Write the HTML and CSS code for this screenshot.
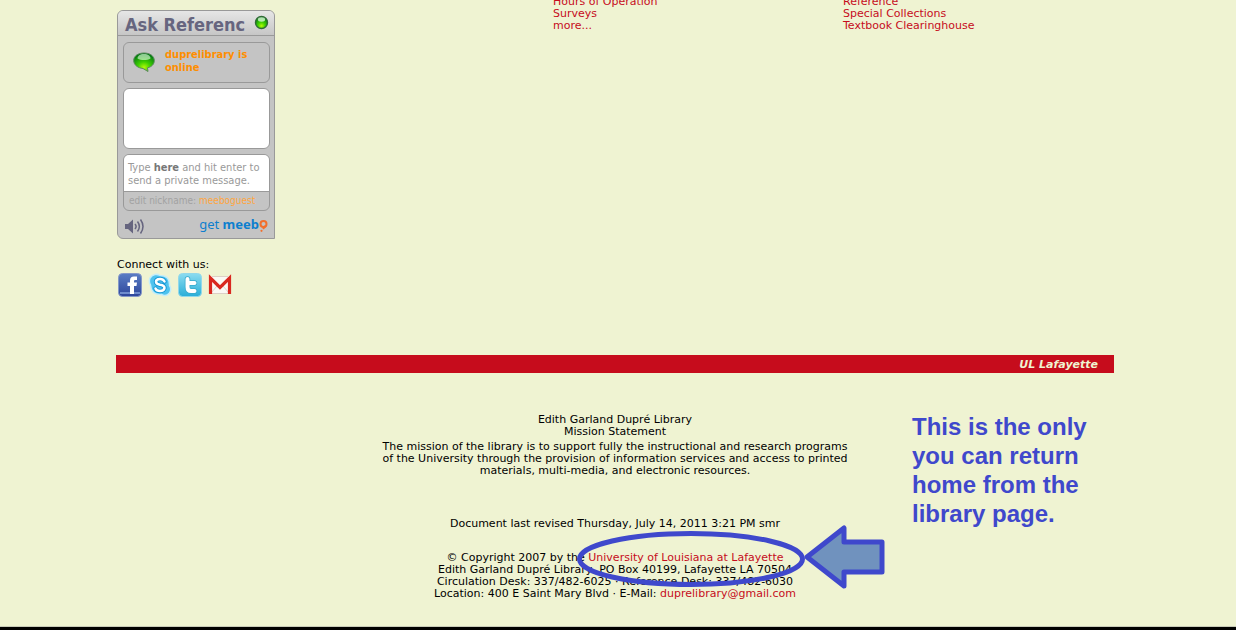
FILE: index.html
```html
<!DOCTYPE html>
<html lang="en">
<head>
<meta charset="utf-8">
<title>Edith Garland Dupré Library</title>
<link rel="stylesheet" href="styles.css">
</head>
<body>
<div class="page">
  <main class="content">
    <aside class="sidebar">
      <section class="chat">
        <header class="chat-head">
          <h2 class="chat-title">Ask Referenc</h2>
          <svg class="chat-dot" width="15" height="15" viewBox="0 0 15 15" aria-hidden="true">
            <defs>
              <radialGradient id="orb" cx="50%" cy="78%" r="75%"><stop offset="0" stop-color="#b4fa08"/><stop offset=".4" stop-color="#3fd000"/><stop offset="1" stop-color="#007414"/></radialGradient>
            </defs>
            <circle cx="7.5" cy="7.5" r="6" fill="url(#orb)" stroke="#2f6b35" stroke-width="1.4"/>
            <ellipse cx="7.5" cy="4.5" rx="3.6" ry="2.2" fill="#e6ffe6" opacity=".75"/>
          </svg>
        </header>
        <div class="chat-body">
          <div class="status">
            <svg class="status-icon" width="24" height="22" viewBox="0 0 24 22" aria-hidden="true">
              <path d="M12 2C6 2 1.700 5 1.700 9.500S6 17 11 17.500L16 20.500L15.500 16.800C20 15.800 22.300 13 22.300 9.500C22.300 5 18 2 12 2Z" fill="url(#orb)" stroke="#5c8a5c" stroke-width="1"/>
              <path d="M12 3C8 3 5.500 5 5.500 7.500C9 9.500 15 9.500 18.500 7.500C18.500 5 16 3 12 3Z" fill="#eaffea" opacity=".6"/>
            </svg>
            <p class="status-text">duprelibrary is<br>online</p>
          </div>
          <div class="log"></div>
          <form class="entry">
            <div class="compose">
              <label class="compose-label" for="message">Type <b>here</b> and hit enter to<br>send a private message.</label>
              <textarea class="compose-box" id="message"></textarea>
            </div>
            <div class="nick">
              <label for="nick">edit nickname:</label>
              <input class="nick-input" id="nick" type="text" value="meeboguest">
            </div>
          </form>
          <div class="chat-foot">
            <button class="sound" type="button" aria-label="Sound">
              <svg width="21" height="17" viewBox="0 0 21 17" aria-hidden="true">
                <path d="M1 6H4L9 1.500V15.500L4 11H1Z" fill="#66657f"/>
                <path d="M11 6Q13.200 8.500 11 11M13.500 3.500Q17.200 8.500 13.500 13.500M16.500 1.500Q21.500 8.500 16.500 15.500" fill="none" stroke="#66657f" stroke-width="1.500"/>
              </svg>
            </button>
            <a class="meebo" href="#">get <b>meeb</b><svg width="9" height="16" viewBox="0 0 9 16" aria-label="o"><circle cx="4.500" cy="7" r="3" fill="none" stroke="#f26f2d" stroke-width="2"/><path d="M6.500 9L4 11.800" stroke="#f26f2d" stroke-width="2"/><circle cx="2.500" cy="13.800" r="1.100" fill="#f26f2d"/></svg></a>
          </div>
        </div>
      </section>
      <p class="connect">Connect with us:</p>
      <nav class="social">
        <a href="#" aria-label="Facebook"><svg width="24" height="24" viewBox="0 0 24 24"><defs><linearGradient id="fb" x1="0" y1="0" x2="0" y2="1"><stop offset="0" stop-color="#5a7dc4"/><stop offset="1" stop-color="#2d469b"/></linearGradient></defs><rect x=".5" y=".5" width="23" height="23" rx="4" fill="url(#fb)" stroke="#8497c8"/><path d="M2 20H22" stroke="#6f8ccd" stroke-width="2"/><path d="M12 21V13H9.500V9.500H12V7.500Q12 3.500 16 3.500H19V7H17Q16 7 16 8.200V9.500H19L18.500 13H16V21Z" fill="#fff"/></svg></a>
        <a href="#" aria-label="Skype"><svg width="24" height="24" viewBox="0 0 24 24"><path d="M7 1.500Q10 1 12 2.500Q22 2.500 21.500 12.500Q24 16 21.500 20Q18 24 13.500 21.500Q3 22 2.500 12Q.5 9 2 5Q4 2 7 1.500Z" fill="#4fc3ee" stroke="#c4edfa" stroke-width="1.500"/><path d="M16.500 8.500Q15 5.800 11.800 6Q8 6.200 8 8.800Q8 11 12 11.800Q16.500 12.500 16.500 15Q16 18 12 18Q8.500 18 7.500 15.500" fill="none" stroke="#1698d6" stroke-width="4.500" stroke-linecap="round"/><path d="M16.500 8.500Q15 5.800 11.800 6Q8 6.200 8 8.800Q8 11 12 11.800Q16.500 12.500 16.500 15Q16 18 12 18Q8.500 18 7.500 15.500" fill="none" stroke="#fff" stroke-width="2.500" stroke-linecap="round"/></svg></a>
        <a href="#" aria-label="Twitter"><svg width="24" height="24" viewBox="0 0 24 24"><defs><linearGradient id="tw" x1="0" y1="0" x2="0" y2="1"><stop offset="0" stop-color="#8bdcf0"/><stop offset="1" stop-color="#29aed8"/></linearGradient></defs><rect x=".5" y=".5" width="23" height="23" rx="4" fill="url(#tw)" stroke="#91d8ea"/><path d="M9.500 6V14Q9.500 18 13 18H16.500M9.500 10H16.500" fill="none" stroke="#36a9cc" stroke-width="5.500" stroke-linecap="round"/><path d="M9.500 6V14Q9.500 18 13 18H16.500M9.500 10H16.500" fill="none" stroke="#fff" stroke-width="4" stroke-linecap="round"/></svg></a>
        <a href="#" aria-label="Gmail"><svg width="24" height="24" viewBox="0 0 24 24"><rect x="1" y="3" width="22" height="18" fill="#fbf9f4"/><path d="M3 20L9 13M21 20L15 13" stroke="#ddd4cb" fill="none"/><path d="M4 3.500H20M4 20.500H20" stroke="#ddd0c6"/><path d="M2.500 21V5L12 14.500L21.500 5V21" fill="none" stroke="#d9281f" stroke-width="3.200"/></svg></a>
      </nav>
    </aside>
    <ul class="links">
      <li><a href="#">Hours of Operation</a></li>
      <li><a href="#">Surveys</a></li>
      <li><a href="#">more...</a></li>
    </ul>
    <ul class="links">
      <li><a href="#">Reference</a></li>
      <li><a href="#">Special Collections</a></li>
      <li><a href="#">Textbook Clearinghouse</a></li>
    </ul>
  </main>
  <div class="bar"><a class="bar-link" href="#">UL Lafayette</a></div>
  <footer class="footer">
    <div class="about">
      <p>Edith Garland Dupré Library<br>Mission Statement</p>
      <p class="mission">The mission of the library is to support fully the instructional and research programs<br>of the University through the provision of information services and access to printed<br>materials, multi-media, and electronic resources.</p>
      <p class="revised">Document last revised Thursday, July 14, 2011 3:21 PM smr</p>
      <p class="address">© Copyright 2007 by the <a href="#">University of Louisiana at Lafayette</a><br>Edith Garland Dupré Library, PO Box 40199, Lafayette LA 70504<br>Circulation Desk: 337/482-6025 · Reference Desk: 337/482-6030<br>Location: 400 E Saint Mary Blvd · E-Mail: <a href="#">duprelibrary@gmail.com</a></p>
    </div>
    <p class="note">This is the only<br>you can return<br>home from the<br>library page.</p>
    <svg class="marker" width="310" height="66" viewBox="0 0 310 66" aria-hidden="true">
      <ellipse cx="116" cy="35" rx="111.500" ry="25.500" fill="none" stroke="#3f48cc" stroke-width="5"/>
      <path d="M232 33L269 4V18H307V48H269V62Z" fill="#7092be" stroke="#3f48cc" stroke-width="5" stroke-linejoin="round"/>
    </svg>
  </footer>
</div>
</body>
</html>
```
FILE: styles.css
```css
* { box-sizing: border-box; }
body {
  margin: 0;
  min-height: 100vh;
  display: flex;
  flex-direction: column;
  overflow: hidden;
  background: #eff3d2;
  border-bottom: 3px solid #000;
  color: #000;
  font: 11px/12px Verdana, "DejaVu Sans", sans-serif;
}
p, h2, ul { margin: 0; padding: 0; }
a { color: #c60c1c; text-decoration: none; }
svg { display: block; }
.page { flex: 1; padding: 0 122px 0 116px; border-bottom: 1px solid #c8cbb8; }
.content { display: grid; grid-template-columns: 437fr 290fr 271fr; }
.links { list-style: none; margin-top: -4px; }
.sidebar { padding: 10px 0 58px 1px; }
.chat {
  width: 158px;
  border: 1px solid #999;
  border-radius: 6px 6px 0 6px;
  background: #c4c4c4;
  font-family: Tahoma, "DejaVu Sans Condensed", sans-serif;
  line-height: 13px;
}
.chat-head {
  display: flex;
  justify-content: space-between;
  height: 25px;
  padding: 4px 5px 0 7px;
  border-bottom: 1px solid #999;
  border-radius: 5px 5px 0 0;
  background: linear-gradient(#e6e6e6, #c6c6c6);
}
.chat-title { color: #66657f; font-size: 18px; line-height: 20px; white-space: nowrap; }
.chat-body { display: flex; flex-direction: column; gap: 5px; padding: 6px 4px 2px 5px; }
.status, .log, .entry { border: 1px solid #999; border-radius: 6px; }
.status { display: flex; gap: 9px; height: 41px; padding: 5px 8px; }
.status-icon { margin-top: 3px; }
.status-text { color: #ff8e00; font-weight: bold; white-space: nowrap; }
.log { height: 61px; background: #fff; }
.entry { overflow: hidden; }
.compose { position: relative; height: 37px; background: #fff; border-bottom: 1px solid #999; }
.compose-label { position: absolute; left: 4px; top: 6px; color: #999; white-space: nowrap; pointer-events: none; }
.compose-label b { color: #777; }
.compose-box { display: block; width: 100%; height: 100%; border: 0; background: transparent; resize: none; font: inherit; }
.nick { display: flex; gap: 3px; padding: 2px 0 3px 5px; color: #a2a2a2; font-size: 10px; white-space: nowrap; }
.nick-input { flex: 1; min-width: 0; height: 13px; padding: 0; border: 0; background: transparent; color: #ffa640; font: inherit; }
.chat-foot { display: flex; justify-content: space-between; height: 20px; padding: 1px 2px 0 1px; }
.sound { padding: 0; border: 0; background: transparent; }
.meebo { display: flex; color: #0d7fce; font: 13px/15px "Noto Sans", sans-serif; white-space: pre; }
.connect { margin-top: 20px; }
.social { display: flex; gap: 6px; margin-top: 2px; padding-left: 1px; }
.bar { padding: 4px 16px 2px; background: #c60c1c; text-align: right; }
.bar-link { color: #eff3d2; font-weight: bold; font-style: italic; }
.footer { position: relative; display: grid; grid-template-columns: 1fr 480px 1fr; padding-top: 41px; }
.about { grid-column: 2; text-align: center; white-space: nowrap; }
.mission { margin-top: 3px; }
.revised { margin-top: 41px; }
.address { margin-top: 22px; }
.note { margin-top: -2px; padding-left: 57px; color: #3f48cc; font: bold 24px/29px Arial, "Liberation Sans", sans-serif; white-space: nowrap; }
.marker { position: absolute; left: calc(50% - 40px); top: 151px; pointer-events: none; }
```
